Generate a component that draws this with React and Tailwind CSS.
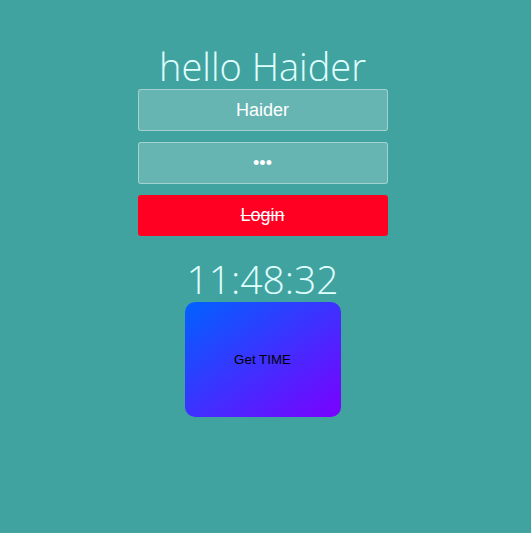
export default function App() {
  return (
    <div className="min-h-[533px] w-full bg-[#41a39f] font-['Liberation_Sans',Arial,sans-serif]">
      <div className="flex w-[525px] flex-col items-center pt-[42px]">
        <h1 className="font-['Open_Sans',sans-serif] text-[38px] font-light leading-[48px] text-[#e0ffff]">hello Haider</h1>
        <input
          className="mt-[-1px] h-[42px] w-[250px] rounded-[3px] border border-white/40 bg-white/20 text-center text-[18px] text-white outline-none"
          defaultValue="Haider"
        />
        <input
          type="password"
          className="mt-[11px] h-[42px] w-[250px] rounded-[3px] border border-white/40 bg-white/20 text-center text-[18px] text-white outline-none"
          defaultValue="123"
        />
        <button className="mt-[11px] h-[41px] w-[250px] rounded-[3px] bg-[#ff0022] text-[18px] text-white line-through">Login</button>
        <div className="mt-[19px] font-['Open_Sans',sans-serif] text-[39px] font-light leading-[47px] text-[#e0ffff]">11:48:32</div>
        <button className="mt-[0px] flex h-[115px] w-[156px] items-center justify-center rounded-[10px] bg-[linear-gradient(to_bottom_right,#0062ff,#7b00ff)] text-[13.33px] text-black">Get TIME</button>
      </div>
    </div>
  );
}
